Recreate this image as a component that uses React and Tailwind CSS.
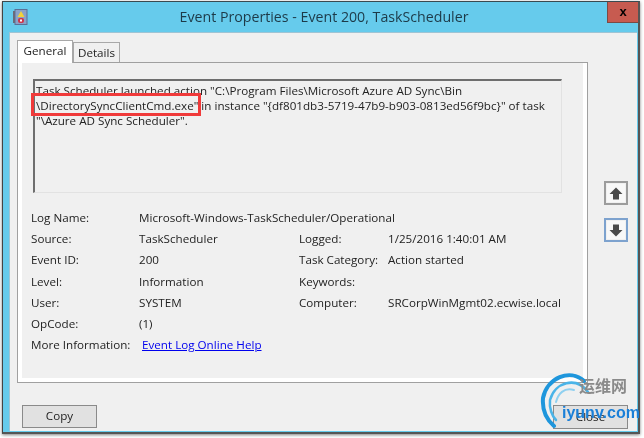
import React from 'react';

const rows = [
    ['Source:', 'TaskScheduler', 'Logged:', '1/25/2016 1:40:01 AM'],
    ['Event ID:', '200', 'Task Category:', 'Action started'],
    ['Level:', 'Information', 'Keywords:', ''],
    ['User:', 'SYSTEM', 'Computer:', 'SRCorpWinMgmt02.ecwise.local'],
    ['OpCode:', '(1)', '', ''],
];

const ArrowButton = ({ down, active }) => (
    <div className={`w-[24px] h-[24px] border-2 flex items-center justify-center ${active ? 'border-[#7da2ce]' : 'border-[#9c9c9c]'}`}>
        <div className="w-[18px] h-[18px] bg-[#f8f8f8] flex items-center justify-center">
            <svg width="14" height="13" viewBox="0 0 14 13" className={down ? 'rotate-180' : ''}>
                <path d="M7 0.5 L13.5 7 L10 7 L10 12.5 L4 12.5 L4 7 L0.5 7 Z" fill="#4a4a4a" />
            </svg>
        </div>
    </div>
);

const Watermark = () => (
    <div className="absolute left-[540px] top-[370px] w-[100px] h-[62px]">
        <svg width="70" height="62" viewBox="0 0 70 62" className="absolute left-0 top-0">
            <path d="M44 11 C30 -2 7 8 3 28 C2 40 7 50 14 56" fill="none" stroke="#1e96dc" strokeWidth="4" strokeLinecap="round" />
            <path d="M48 22 C36 6 15 12 10 30 C9 38 12 46 16 50" fill="none" stroke="#4ab4e8" strokeWidth="2.5" strokeLinecap="round" />
            <path d="M34 20 C24 17 18 24 16 32" fill="none" stroke="#8fd0f0" strokeWidth="2" strokeLinecap="round" />
        </svg>
        <span className="absolute left-[39px] top-[5px] text-[16px] leading-[20px] font-bold text-[#8a8a8a] font-['Noto_Sans_CJK_SC',sans-serif] whitespace-nowrap">运维网</span>
        <span className="absolute left-[22px] top-[33px] text-[16px] leading-[20px] font-bold text-[#1a7fd8] font-['Liberation_Sans',sans-serif] whitespace-nowrap">iyunv.com</span>
    </div>
);

const App = () => {
    return (
        <div className="relative w-[644px] h-[438px] bg-white overflow-hidden pl-[2px] pt-[1px] font-['Open_Sans',sans-serif] text-[#222222] blur-[0.35px]">
            <div className="w-[638px] h-[433px] bg-[#66cbec] border-t border-r-2 border-b-2 border-l border-t-[#3a4a50] border-r-[#555] border-b-[#555] border-l-[#444] shadow-[0_1px_3px_rgba(0,0,0,0.5)] flex flex-col">
                {/* title bar */}
                <div className="relative h-[30px] shrink-0 flex items-center justify-center">
                    <svg width="15" height="16" viewBox="0 0 15 16" className="absolute left-[10px] top-[7px]">
                        <rect x="2" y="0.5" width="12" height="15" fill="#8aa2c8" stroke="#5b6f96" />
                        <rect x="0" y="2" width="2" height="12" fill="#6a6a7a" />
                        <path d="M8 2 L11.5 8 L4.5 8 Z" fill="#f2d23a" />
                        <rect x="5" y="9" width="6" height="5" rx="2" fill="#d0344a" />
                        <rect x="7" y="10.5" width="2" height="2" fill="#fff" />
                    </svg>
                    <span className="text-[14.2px] text-[#1d3a48] ml-[7px] -mt-[1px]">Event Properties - Event 200, TaskScheduler</span>
                    <div className="absolute right-0 top-0 w-[31px] h-[21px] bg-[#c75b50] border-l border-b border-[#7c4a44] flex items-center justify-center">
                        <span className="text-[13px] leading-none font-bold text-black font-['Liberation_Sans',sans-serif] -mt-[1px]">x</span>
                    </div>
                </div>

                {/* dialog body */}
                <div className="flex-1 ml-[6px] mr-[1px] mb-[1px] bg-[#f0f0f0] border-t border-l border-[#9fc4d4] pl-[7px] pt-[7px] flex flex-col">
                    <div className="flex items-end h-[22px] relative z-10 text-[11.65px]">
                        <div className="w-[56px] h-[23px] bg-white border border-b-0 border-[#a8a8a8] flex items-center justify-center -mb-[1px] pb-[2px]">General</div>
                        <div className="w-[47px] h-[20px] bg-[#f0f0f0] border border-b-0 border-[#a8a8a8] flex items-center justify-center">Details</div>
                    </div>

                    <div className="flex items-start">
                        <div className="w-[571px] h-[321px] border border-[#a0a0a0] bg-white p-[4px] pt-0">
                            <div className="w-full h-full bg-[#f0f0f0] pl-[11px] pr-[21px] pt-[16px] text-[11.65px] leading-[15px]">
                                <div className="h-[114px] border-t-2 border-l-2 border-t-[#6e6e6e] border-l-[#6e6e6e] border-r border-b border-r-[#e2e2e2] border-b-[#e2e2e2] pl-[1px] pt-[2px]">
                                    <p className="whitespace-nowrap">Task Scheduler launched action "C:\Program Files\Microsoft Azure AD Sync\Bin</p>
                                    <p className="whitespace-nowrap">\DirectorySyncClientCmd.exe" in instance "{'{'}df801db3-5719-47b9-b903-0813ed56f9bc{'}'}" of task</p>
                                    <p className="whitespace-nowrap">"\Azure AD Sync Scheduler".</p>
                                </div>

                                <div className="mt-[14px] -ml-[2px] leading-[21.2px]">
                                    <div className="flex">
                                        <span className="w-[108px]">Log Name:</span>
                                        <span>Microsoft-Windows-TaskScheduler/Operational</span>
                                    </div>
                                    {rows.map(([label, value, label2, value2]) => (
                                        <div key={label} className="flex h-[21.2px]">
                                            <span className="w-[108px]">{label}</span>
                                            <span className="w-[160px]">{value}</span>
                                            <span className="w-[89px]">{label2}</span>
                                            <span>{value2}</span>
                                        </div>
                                    ))}
                                    <div className="flex">
                                        <span className="w-[111px]">More Information:</span>
                                        <a className="text-[#0000ee] underline">Event Log Online Help</a>
                                    </div>
                                </div>
                            </div>
                        </div>
                        <div className="ml-[16px] mt-[119px] flex flex-col gap-[13px]">
                            <ArrowButton />
                            <ArrowButton down active />
                        </div>
                    </div>

                    <div className="flex justify-between mt-[22px] pl-[5px] w-[611px] text-[11.65px]">
                        <div className="w-[75px] h-[23px] bg-[#e1e1e1] border border-[#8a8a8a] flex items-center justify-center pb-[1px]">Copy</div>
                        <div className="w-[75px] h-[24px] bg-[#e1e1e1] border border-[#8a8a8a] flex items-center justify-center pb-[1px]">Close</div>
                    </div>
                </div>
            </div>

            {/* red annotation box */}
            <div className="absolute left-[31px] top-[93px] w-[170px] h-[23px] border-[3px] border-[#f03a3a]" />
            <Watermark />
        </div>
    );
};

export default App;
